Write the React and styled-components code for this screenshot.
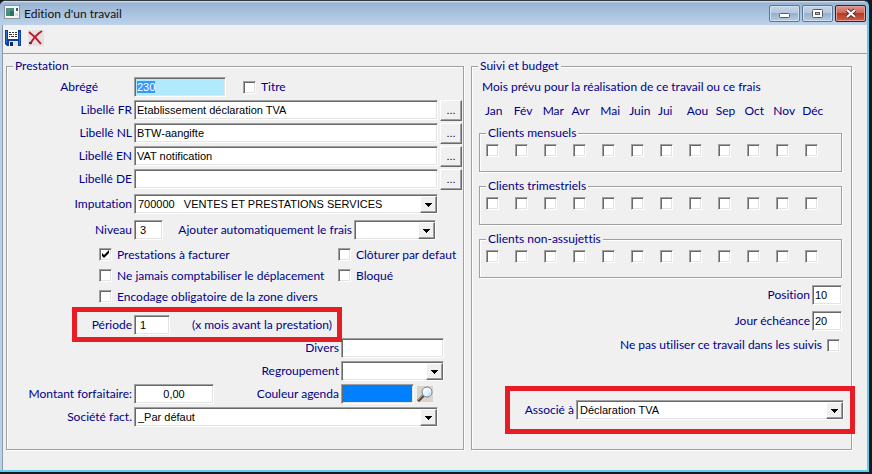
import React, { useEffect, useRef } from 'react';
import styled, { createGlobalStyle, css } from 'styled-components';

const colors = {
  face: '#f0f0f0',
  label: '#00008b',
  line: '#a0a0a0',
  dark: '#696969',
  light: '#e3e3e3',
  mark: '#e81c24',
}

const months = ['Jan', 'Fév', 'Mar', 'Avr', 'Mai', 'Juin', 'Jui', 'Aou', 'Sep', 'Oct', 'Nov', 'Déc'];

const descriptions = [
  { lang: 'FR', value: 'Etablissement déclaration TVA' },
  { lang: 'NL', value: 'BTW-aangifte' },
  { lang: 'EN', value: 'VAT notification' },
  { lang: 'DE', value: '' },
];

const clientGroups = ['Clients mensuels', 'Clients trimestriels', 'Clients non-assujettis'];

function Combo({ id, value, width, grow }) {
  return (
    <ComboBox $width={width} $grow={grow}>
      <Select id={id} defaultValue={value}>
        <option>{value}</option>
      </Select>
      <ComboArrow>
        <svg width="7" height="4" viewBox="0 0 7 4" shapeRendering="crispEdges">
          <path d="M0 0h7v1H0zM1 1h5v1H1zM2 2h3v1H2zM3 3h1v1H3z" fill="#000" />
        </svg>
      </ComboArrow>
    </ComboBox>
  );
}

function SaveIcon() {
  return (
    <svg width="16" height="16" viewBox="0 0 16 16">
      <path d="M0 0h16v16H2l-2-2z" fill="#0b3fa0" />
      <path d="M1 1h1v12H1zM14 2h1v13h-1z" fill="#2f6fd0" />
      <path d="M3 0h10v9H3z" fill="#fff" />
      <path d="M4 2h2v1H4zM7 2h2v1H7zM10 2h2v1h-2zM4 4h3v1H4zM8 4h1v1H8zM10 4h2v1h-2zM4 6h1v1H4zM6 6h3v1H6zM10 6h2v1h-2z" fill="#333" />
      <path d="M4 11h9v5H4z" fill="#dfe6ee" />
      <path d="M5 12h3v4H5z" fill="#082a66" />
    </svg>
  );
}

function DeleteIcon() {
  return (
    <svg width="16" height="16" viewBox="0 0 16 16">
      <path d="M0 0h16v16H0z" fill="#e6e1e1" />
      <path d="M1 2C5 5 10 10 13 14" stroke="#c01830" strokeWidth="2" fill="none" />
      <path d="M14 1C9 4 5 9 2 14" stroke="#c01830" strokeWidth="2" fill="none" />
      <path d="M1 12h3v2H1z" fill="#8c2434" />
    </svg>
  );
}

function AppIcon() {
  return (
    <svg width="16" height="14" viewBox="0 0 16 14">
      <path d="M0 0h16v14H0z" fill="#8d9499" />
      <path d="M1 1h14v12H1z" fill="#f4f7f8" />
      <path d="M2 3h8v8H2z" fill="#3f8f80" />
      <path d="M2 3h4v4H2z" fill="#5d8a8f" />
      <path d="M6 6h4v5H6z" fill="#2b7063" />
      <path d="M12 3h2v3h-2z" fill="#3f5964" />
      <path d="M11 8h3v3h-3z" fill="#d5dde0" />
    </svg>
  );
}

function SearchIcon() {
  return (
    <svg width="16" height="16" viewBox="0 0 16 16">
      <path d="M0 0h16v16H0z" fill="#d9d4cc" />
      <path d="M1 15l6-6" stroke="#5f4638" strokeWidth="3" />
      <path d="M1 14l5-5" stroke="#c99a6a" strokeWidth="1" />
      <circle cx="10" cy="6" r="5" fill="#e9f5fd" stroke="#75839a" strokeWidth="1" />
      <path d="M7 6a3 3 0 0 1 3-3" stroke="#fff" strokeWidth="2" fill="none" />
      <path d="M13 6a3 3 0 0 1-3 3" stroke="#b5d9f2" strokeWidth="1" fill="none" />
    </svg>
  );
}

function App() {
  const codeRef = useRef(null);

  useEffect(() => {
    codeRef.current.focus();
    codeRef.current.select();
  }, []);

  return (
    <>
      <GlobalStyle />
      <Window>
        <TitleBar>
          <AppIcon />
          <Title>Edition d'un travail</Title>
          <CaptionButton aria-label="Réduire">
            <svg width="12" height="12" viewBox="0 0 12 12">
              <rect x="0.5" y="5.5" width="10" height="4" rx="1" fill="#fff" stroke="#535a66" />
            </svg>
          </CaptionButton>
          <CaptionButton aria-label="Agrandir">
            <svg width="12" height="12" viewBox="0 0 12 12">
              <rect x="0.5" y="1.5" width="10" height="8" rx="1" fill="#fff" stroke="#535a66" />
              <rect x="3.5" y="4.5" width="4" height="2" fill="#a9c0da" stroke="#535a66" />
            </svg>
          </CaptionButton>
          <CaptionButton $close aria-label="Fermer">
            <svg width="12" height="12" viewBox="0 0 12 12">
              <path d="M2 2l8 7M10 2l-8 7" stroke="#5a3038" strokeWidth="4" />
              <path d="M2 2l8 7M10 2l-8 7" stroke="#fff" strokeWidth="2" />
            </svg>
          </CaptionButton>
        </TitleBar>
        <Client>
          <Toolbar>
            <IconButton aria-label="Enregistrer"><SaveIcon /></IconButton>
            <IconButton aria-label="Supprimer"><DeleteIcon /></IconButton>
          </Toolbar>
          <Main>
            <Panel>
              <Legend>Prestation</Legend>
              <Fields $gap={3} $top={3}>
                <Row>
                  <Label htmlFor="code" $width={125} $inset={34}>Abrégé</Label>
                  <CodeInput id="code" ref={codeRef} defaultValue="230" $width={92} />
                  <TitleCheck>
                    <Checkbox type="checkbox" />Titre
                  </TitleCheck>
                </Row>
                {descriptions.map((d) => (
                  <Row key={d.lang}>
                    <Label htmlFor={`lib${d.lang}`} $width={125}>Libellé {d.lang}</Label>
                    <Input id={`lib${d.lang}`} defaultValue={d.value} $grow />
                    <MoreButton aria-label={`Détail ${d.lang}`}>...</MoreButton>
                  </Row>
                ))}
              </Fields>
              <Fields $gap={6} $top={5}>
                <Row $end={25}>
                  <Label htmlFor="imputation" $width={125}>Imputation</Label>
                  <Combo id="imputation" value={'700000\u00a0\u00a0\u00a0VENTES ET PRESTATIONS SERVICES'} grow />
                </Row>
                <Row $end={27}>
                  <Label htmlFor="niveau" $width={125}>Niveau</Label>
                  <Input id="niveau" defaultValue="3" $width={29} $pad={5} />
                  <Label htmlFor="frais" $grow>Ajouter automatiquement le frais</Label>
                  <Combo id="frais" value="" width={82} />
                </Row>
              </Fields>
              <Options>
                <CheckLabel><Checkbox type="checkbox" defaultChecked />Prestations à facturer</CheckLabel>
                <CheckLabel><Checkbox type="checkbox" />Clôturer par defaut</CheckLabel>
                <CheckLabel><Checkbox type="checkbox" />Ne jamais comptabiliser le déplacement</CheckLabel>
                <CheckLabel><Checkbox type="checkbox" />Bloqué</CheckLabel>
                <CheckLabel><Checkbox type="checkbox" />Encodage obligatoire de la zone divers</CheckLabel>
              </Options>
              <PeriodBox>
                <Label htmlFor="periode" $width={55}>Période</Label>
                <Input id="periode" defaultValue="1" $width={36} $pad={5} />
                <Hint>(x mois avant la prestation)</Hint>
              </PeriodBox>
              <LowerFields>
                <Row>
                  <Label htmlFor="divers" $width={332}>Divers</Label>
                  <Input id="divers" $width={103} />
                </Row>
                <Row>
                  <Label htmlFor="regroupement" $width={332}>Regroupement</Label>
                  <Combo id="regroupement" value="" width={103} />
                </Row>
                <Row>
                  <Label htmlFor="montant" $width={125}>Montant forfaitaire:</Label>
                  <Input id="montant" defaultValue="0,00" $width={80} $center />
                  <Label htmlFor="couleur" $width={123}>Couleur agenda</Label>
                  <ColorInput id="couleur" readOnly $width={73} />
                  <IconButton aria-label="Choisir une couleur"><SearchIcon /></IconButton>
                </Row>
                <Row $end={25}>
                  <Label htmlFor="societe" $width={125}>Société fact.</Label>
                  <Combo id="societe" value="_Par défaut" grow />
                </Row>
              </LowerFields>
            </Panel>
            <Panel>
              <Legend>Suivi et budget</Legend>
              <Intro>Mois prévu pour la réalisation de ce travail ou ce frais</Intro>
              <MonthGrid>
                {months.map((m) => <span key={m}>{m}</span>)}
              </MonthGrid>
              <Groups>
                {clientGroups.map((group) => (
                  <ClientGroup key={group}>
                    <Legend>{group}</Legend>
                    <CheckGrid>
                      {months.map((m) => (
                        <Checkbox key={m} type="checkbox" aria-label={`${group} ${m}`} />
                      ))}
                    </CheckGrid>
                  </ClientGroup>
                ))}
              </Groups>
              <Numbers>
                <Row>
                  <Label htmlFor="position" $grow>Position</Label>
                  <Input id="position" defaultValue="10" $width={30} />
                </Row>
                <Row>
                  <Label htmlFor="echeance" $grow>Jour échéance</Label>
                  <Input id="echeance" defaultValue="20" $width={30} />
                </Row>
              </Numbers>
              <Exclude>
                Ne pas utiliser ce travail dans les suivis<Checkbox type="checkbox" />
              </Exclude>
              <LinkedBox>
                <Label htmlFor="associe" $width={58}>Associé à</Label>
                <Combo id="associe" value="Déclaration TVA" grow />
              </LinkedBox>
            </Panel>
          </Main>
        </Client>
      </Window>
    </>
  );
}

export default App;

const GlobalStyle = createGlobalStyle`
  * {
    box-sizing: border-box;
  }
  body {
    margin: 0;
    background: #14181f;
    color: ${colors.label};
    font: 12px/16px Lato, sans-serif;
    font-variant-ligatures: none;
  }
  button, input, select {
    margin: 0;
    font: 11px/16px "Liberation Sans", sans-serif;
    border-radius: 0;
    outline: none;
  }
`

const sunken = css`
  border: 1px solid;
  border-color: ${colors.line} #fff #fff ${colors.line};
  box-shadow: inset 1px 1px ${colors.dark}, inset -1px -1px ${colors.light};
`

const raised = css`
  border: 1px solid;
  border-color: #fff ${colors.dark} ${colors.dark} #fff;
  box-shadow: inset -1px -1px ${colors.line};
  background: ${colors.face};
`

const Window = styled.div`
  margin-right: 3px;
  border-top: 1px solid #33383f;
  border-right: 2px solid #5fcdea;
  border-bottom: 2px solid #5fcdea;
  border-radius: 6px 6px 0 0;
  background: #b9d1ea;
  overflow: hidden;
`

const TitleBar = styled.header`
  display: flex;
  align-items: flex-start;
  height: 24px;
  padding: 4px 1px 0 4px;
  background: linear-gradient(#dce8f4 0, #98b3d2 2px, #a9c2de 50%, #bdd2e9);
  svg {
    flex: none;
  }
`

const Title = styled.h1`
  flex: 1;
  margin: 0;
  padding-left: 4px;
  color: #111;
  font-size: 12px;
  line-height: 18px;
  font-weight: 400;
`

const CaptionButton = styled.button`
  display: flex;
  align-items: center;
  justify-content: center;
  width: 31px;
  height: 17px;
  margin-left: 2px;
  padding: 0;
  border: 1px solid ${(p) => (p.$close ? '#4a1820' : '#5f7591')};
  border-radius: 2px;
  box-shadow: inset 0 0 0 1px ${(p) => (p.$close ? '#e0a097' : '#d3e0ee')};
  background: ${(p) => (p.$close
    ? 'linear-gradient(#dc9488, #cc6a58 45%, #b93a24 50%, #cc6049)'
    : 'linear-gradient(#c3d4e6, #b4c9df 45%, #98b1cc 50%, #b3cbe3)')};
`

const Client = styled.div`
  margin-left: 2px;
  border-left: 1px solid #8f9aa5;
  background: ${colors.face};
`

const Toolbar = styled.div`
  display: flex;
  gap: 7px;
  height: 29px;
  padding: 5px 2px;
  border-bottom: 1px solid ${colors.line};
`

const IconButton = styled.button`
  width: 16px;
  height: 16px;
  padding: 0;
  border: 0;
  background: none;
  svg {
    display: block;
  }
`

const Main = styled.main`
  display: grid;
  grid-template-columns: 458fr 381fr;
  gap: 7px;
  padding: 4px 15px 20px 3px;
`

const Panel = styled.fieldset`
  min-width: 0;
  margin: 0;
  padding: 0 0 22px;
  border: 1px solid ${colors.line};
  box-shadow: 1px 1px #fff, inset 1px 1px #fff;
`

const Legend = styled.legend`
  height: 16px;
  margin-left: 6px;
  padding: 0 2px;
  background: ${colors.face};
`

const Fields = styled.div`
  display: flex;
  flex-direction: column;
  gap: ${(p) => p.$gap}px;
  padding-top: ${(p) => p.$top}px;
`

const LowerFields = styled(Fields).attrs({ $gap: 3, $top: 0 })`
  margin-top: -4px;
`

const Row = styled.div`
  display: flex;
  align-items: center;
  gap: 2px;
  height: 20px;
  padding-right: ${(p) => p.$end || 0}px;
`

const Label = styled.label`
  flex: ${(p) => (p.$grow ? '1' : 'none')};
  width: ${(p) => (p.$width ? `${p.$width}px` : 'auto')};
  padding-right: ${(p) => p.$inset || 0}px;
  text-align: right;
  white-space: nowrap;
`

const Input = styled.input`
  ${sunken}
  flex: ${(p) => (p.$grow ? '1' : 'none')};
  width: ${(p) => (p.$width ? `${p.$width}px` : 'auto')};
  min-width: 0;
  height: 20px;
  padding: 0 ${(p) => p.$pad || 2}px;
  background: #fff;
  color: #000;
  text-align: ${(p) => (p.$center ? 'center' : 'left')};
`

const CodeInput = styled(Input)`
  background: #b0eafc;
  caret-color: transparent;
  &::selection {
    background: #3399ff;
    color: #fff;
  }
`

const ColorInput = styled(Input)`
  margin-right: 1px;
  background: #0080ff;
`

const MoreButton = styled.button`
  ${raised}
  width: 22px;
  height: 21px;
  margin-right: 1px;
  padding: 0;
  color: #000;
`

const ComboBox = styled.div`
  ${sunken}
  position: relative;
  flex: ${(p) => (p.$grow ? '1' : 'none')};
  width: ${(p) => (p.$width ? `${p.$width}px` : 'auto')};
  min-width: 0;
  height: 20px;
  background: #fff;
`

const Select = styled.select`
  display: block;
  width: 100%;
  height: 18px;
  padding: 0 18px 0 3px;
  border: 0;
  appearance: none;
  background: none;
  color: #000;
`

const ComboArrow = styled.span`
  ${raised}
  position: absolute;
  top: 1px;
  right: 0;
  bottom: 0;
  display: flex;
  align-items: center;
  justify-content: center;
  width: 17px;
  pointer-events: none;
`

const Checkbox = styled.input`
  ${sunken}
  flex: none;
  width: 13px;
  height: 13px;
  appearance: none;
  background: #fff;
  &:checked {
    background: #fff url("data:image/svg+xml,%3Csvg xmlns='http://www.w3.org/2000/svg' viewBox='0 0 11 11'%3E%3Cpath d='M2 4v3l2 2 5-5V1L4 6z'/%3E%3C/svg%3E") center / 11px no-repeat;
  }
`

const CheckLabel = styled.label`
  display: flex;
  align-items: center;
  gap: 5px;
  white-space: nowrap;
`

const TitleCheck = styled(CheckLabel)`
  margin-left: 15px;
`

const Options = styled.div`
  display: grid;
  grid-template-columns: 239px 1fr;
  grid-auto-rows: 21px;
  padding: 4px 0 0 92px;
`

const Highlight = styled.div`
  position: relative;
  display: flex;
  align-items: center;
  gap: 2px;
  border: 5px solid ${colors.mark};
`

const PeriodBox = styled(Highlight)`
  z-index: 1;
  width: 270px;
  height: 35px;
  margin-left: 65px;
`

const Hint = styled.span`
  padding-left: 20px;
  white-space: nowrap;
`

const Intro = styled.p`
  margin: 0;
  padding: 5px 10px 8px;
`

const MonthGrid = styled.div`
  display: grid;
  grid-template-columns: repeat(12, 1fr);
  padding: 0 20px 0 13px;
  white-space: nowrap;
`

const Groups = styled.div`
  display: flex;
  flex-direction: column;
  gap: 6px;
  padding: 6px 9px 0 7px;
`

const ClientGroup = styled(Panel)`
  padding: 3px 0 14px;
`

const CheckGrid = styled.div`
  display: grid;
  grid-template-columns: repeat(12, 1fr);
  padding: 0 7px 0 6px;
`

const Numbers = styled(Fields).attrs({ $gap: 6, $top: 7 })`
  padding-right: 9px;
`

const Exclude = styled(CheckLabel)`
  justify-content: flex-end;
  padding: 6px 11px 0 0;
`

const LinkedBox = styled(Highlight)`
  height: 48px;
  margin: 33px -4px -8px 33px;
  padding: 0 6px;
`
